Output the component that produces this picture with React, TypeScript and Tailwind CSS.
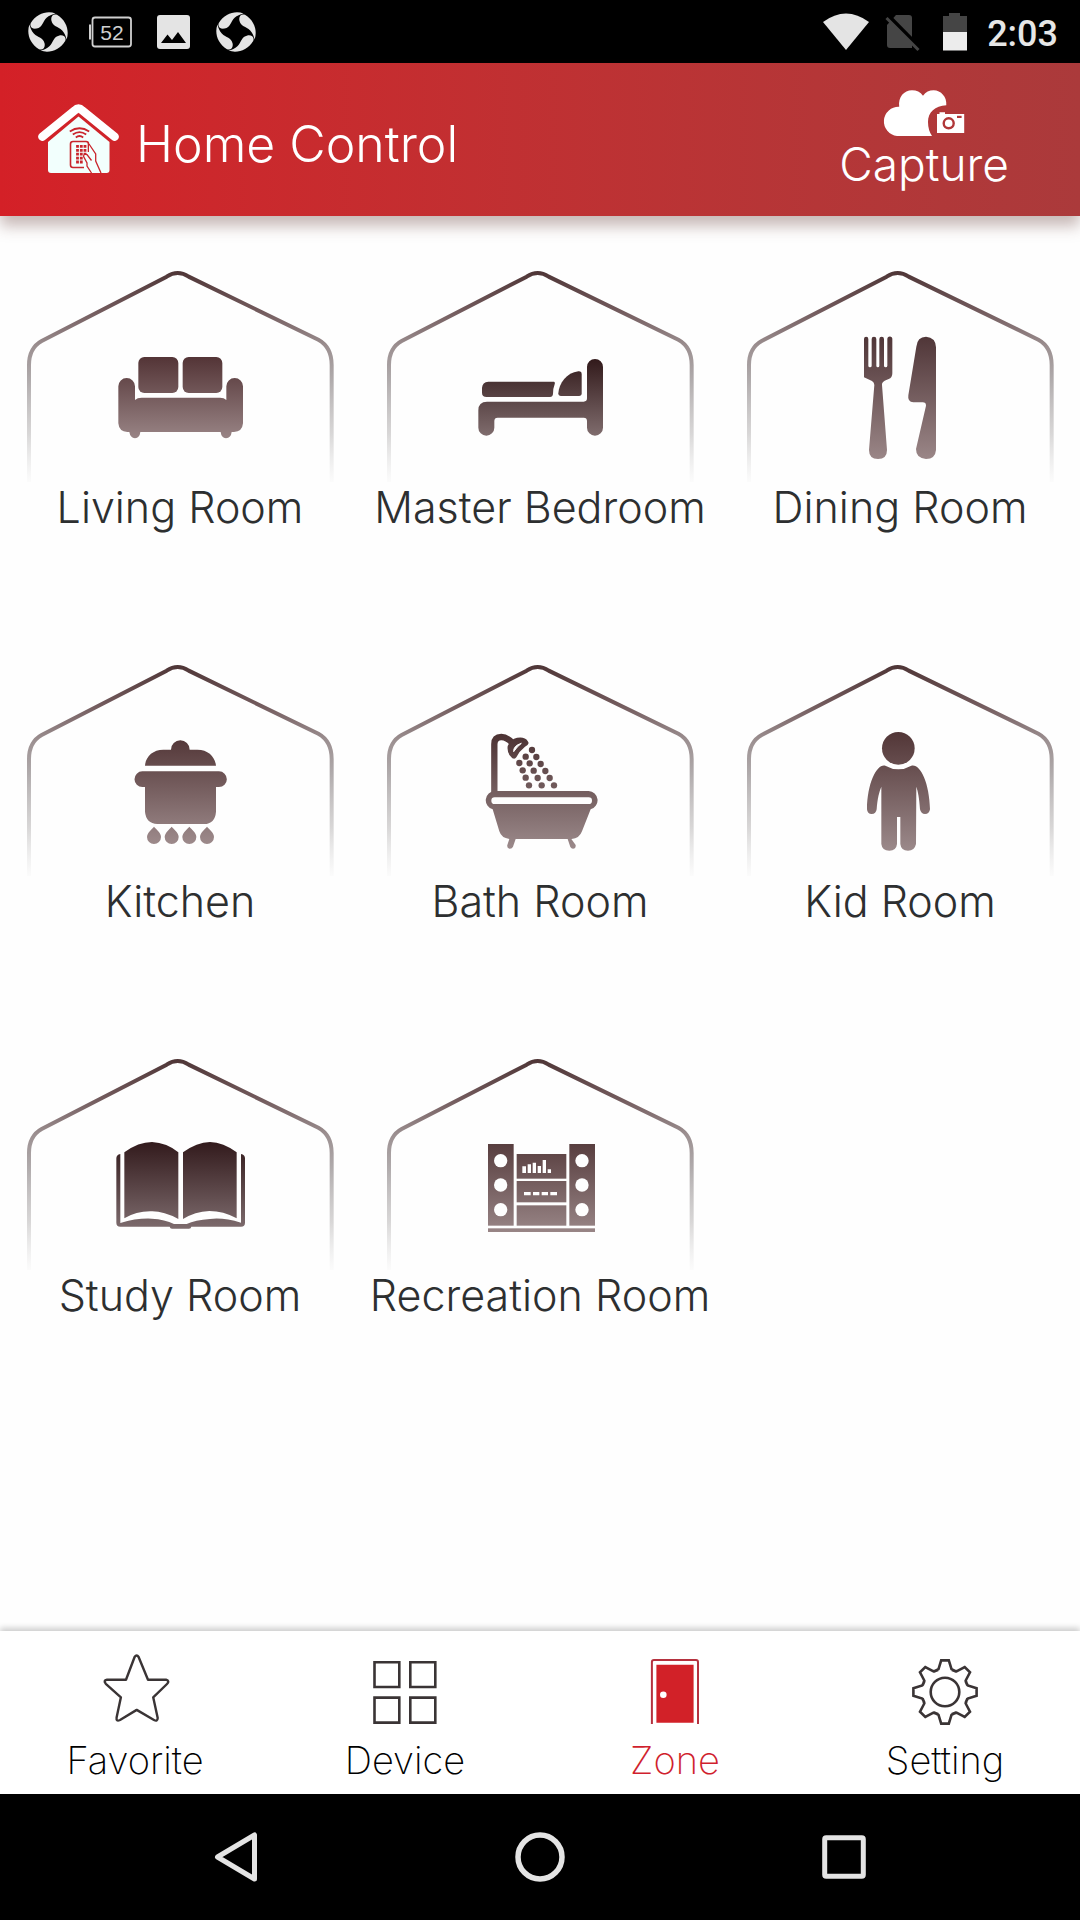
import React, { useState } from 'react';

const GradientDef = ({ id, y1, y2, from, to }) => (
  <linearGradient id={id} gradientUnits="userSpaceOnUse" x1="0" y1={y1} x2="0" y2={y2}>
    <stop offset="0" stopColor={from} />
    <stop offset="1" stopColor={to} />
  </linearGradient>
);

const SofaIcon = () => (
  <g fill="url(#sofa)">
    <GradientDef id="sofa" y1={320} y2={560} from="#533436" to="#978283" />
    <rect x="415" y="321" width="120" height="108" rx="18" />
    <rect x="548" y="321" width="119" height="108" rx="18" />
    <path d="M355 409a25 25 0 0 1 50 0V450Q412 443 425 443H660Q672 443 679 450V409a25 25 0 0 1 50 0V520Q727 545 702 546H695Q693 564 678 565Q664 564 662 546H421Q419 564 405 565Q391 564 388 546H382Q357 545 355 520Z" />
  </g>
);

const BedIcon = () => (
  <g fill="url(#bed)">
    <GradientDef id="bed" y1={327} y2={557} from="#321a1b" to="#7f6c6d" />
    <path d="M385 395H582Q586 396 584 403Q579 415 579 432Q578 441 570 441H380Q366 441 366 428V414Q367 396 385 395Z" />
    <path d="M665 372V430Q665 438 657 438H603Q595 438 595 430C597 400 620 368 655 364Q665 363 665 372Z" />
    <path d="M681 351a24 24 0 0 1 48 0V533a24 24 0 0 1-48 0V513q0-10-10-10H413q-10 0-10 10V533a24 24 0 0 1-48 0V481q0-26 26-26H671q10 0 10-10Z" />
  </g>
);

const CutleryIcon = () => (
  <g fill="url(#cutlery)">
    <GradientDef id="cutlery" y1={260} y2={627} from="#503638" to="#9a8687" />
    <path d="M432 267a6 6 0 0 1 13 0V347a5 5 0 0 0 10 0V267a7 7 0 0 1 14 0V347a4 4 0 0 0 9 0V267a7 7 0 0 1 14 0V347a5 5 0 0 0 10 0V267a7 7 0 0 1 15 0V370Q517 384 506 387L494 392Q485 397 486 405L501 600Q501 627 474 627Q447 627 447 600L463 405Q463 397 456 393L432 382Z" />
    <path d="M589 290Q592 260 618 260Q647 262 648 292V600Q646 627 618 627Q588 625 588 597L618 467Q618 457 608 457H580Q562 456 565 436Z" />
  </g>
);

const PotIcon = () => (
  <g transform="translate(300 198)" fill="url(#pot)">
    <GradientDef id="pot" y1={90} y2={402} from="#543839" to="#9d8a8b" />
    <path d="M135 167C137 140 158 119 190 119H213A28 28 0 0 1 269 119H292C325 119 345 140 348 167Z" />
    <path d="M127 184H357a23 23 0 0 1 0 47H348V305Q345 342 312 342H172Q138 340 135 305V231H127a23 23 0 0 1 0-47Z" />
    {[162, 215, 268, 321].map((x) => (
      <path key={x} d={`M${x} 350c6 8 21 17 21 31a21 21 0 0 1-42 0c0-14 15-23 21-31Z`} />
    ))}
  </g>
);

const showerDrops = [
  [216, 120], [197, 140], [229, 141], [178, 159], [209, 160],
  [242, 162], [188, 181], [221, 182], [256, 183], [197, 203],
  [233, 204], [269, 204], [207, 226], [245, 226], [282, 226],
];

const BathIcon = () => (
  <g transform="translate(300 198)" fill="url(#bath)">
    <GradientDef id="bath" y1={72} y2={415} from="#4c3233" to="#9b898a" />
    <path d="M103 246V103Q103 81 124 81Q141 81 156 98" fill="none" stroke="url(#bath)" strokeWidth="19" />
    <path d="M148 99Q162 80 188 83Q202 86 206 99Q204 107 195 110Q178 123 169 142Q165 149 157 145Q140 132 143 108Z" />
    <path d="M161 125Q160 107 184 100Q171 110 161 125Z" fill="#fefefe" stroke="#fefefe" strokeWidth="3" />
    {showerDrops.map(([x, y]) => (
      <circle key={`${x}-${y}`} cx={x} cy={y} r="9.5" />
    ))}
    <path
      fillRule="evenodd"
      d="M104 243H386A28 28 0 0 1 392 298L366 364Q358 386 335 387H334L347 405Q348 416 339 416Q334 416 331 411L323 387H167L159 410Q156 417 148 416Q140 414 142 405L148 387Q124 384 118 364L98 298A28 28 0 0 1 104 243ZM104 262a10 10 0 0 0 0 20H386a10 10 0 0 0 0-20Z"
    />
  </g>
);

const KidIcon = () => (
  <g transform="translate(300 198)" fill="url(#kid)">
    <GradientDef id="kid" y1={66} y2={422} from="#523637" to="#9b898a" />
    <circle cx="235" cy="115" r="49" />
    <path d="M196 167Q235 189 274 167C300 160 328 215 330 298Q328 312 315 312Q303 312 300 298C298 265 294 245 289 230L288 402Q284 422 264 422Q243 422 241 402V321H231V402Q229 422 208 422Q186 422 184 402V230C178 245 172 265 170 298Q168 312 155 312Q142 312 141 298C142 215 172 160 196 167Z" />
  </g>
);

const BookIcon = () => (
  <g transform="translate(270 216)" fill="url(#book)">
    <GradientDef id="book" y1={96} y2={356} from="#321a1c" to="#7d6b6d" />
    <path d="M103 127Q145 96 186 96Q230 98 265 127V327Q220 303 184 304Q140 303 103 325Z" />
    <path d="M279 127Q320 97 360 96Q400 97 440 127V325Q400 303 358 303Q315 305 279 327Z" />
    <path d="M91 132Q79 134 79 145V338Q79 350 91 350H239Q240 356 246 356H297Q303 356 304 350H453Q465 350 465 338V145Q465 134 453 132V338Q400 322 360 327Q315 330 290 342H252Q225 328 185 326Q140 324 91 339Z" />
  </g>
);

const StereoIcon = () => (
  <g transform="translate(300 216)" fill="url(#stereo)">
    <GradientDef id="stereo" y1={102} y2={366} from="#583e3f" to="#988586" />
    <rect x="84" y="102" width="77" height="245" />
    <rect x="328" y="102" width="77" height="245" />
    <rect x="170" y="132" width="149" height="74" />
    <rect x="170" y="213" width="149" height="64" />
    <rect x="170" y="286" width="149" height="61" />
    <rect x="84" y="355" width="321" height="11" />
    <g fill="#fefefe">
      {[152, 225, 299].map((y) => (
        <React.Fragment key={y}>
          <circle cx="122" cy={y} r="20" />
          <circle cx="366" cy={y} r="20" />
        </React.Fragment>
      ))}
      <path d="M187 169h11v20h-11zM203 163h10v26h-10zM218 158h10v31h-10zM233 168h10v21h-10zM248 150h10v39h-10zM263 178h10v11h-10z" />
      <path d="M192 246h20v10h-20zM219 246h19v10h-19zM245 246h19v10h-19zM271 246h20v10h-20z" />
    </g>
  </g>
);

const rooms = [
  { name: 'Living Room', icon: SofaIcon },
  { name: 'Master Bedroom', icon: BedIcon },
  { name: 'Dining Room', icon: CutleryIcon },
  { name: 'Kitchen', icon: PotIcon },
  { name: 'Bath Room', icon: BathIcon },
  { name: 'Kid Room', icon: KidIcon },
  { name: 'Study Room', icon: BookIcon },
  { name: 'Recreation Room', icon: StereoIcon },
];

const RoomCard = ({ name, icon: Icon }) => (
  <button className="flex flex-col items-center">
    <svg viewBox="0 0 1080 696" className="w-full h-auto">
      <defs>
        <linearGradient id="frame" gradientUnits="userSpaceOnUse" x1="0" y1="62" x2="0" y2="715">
          <stop offset="0" stopColor="#4e3536" />
          <stop offset="0.18" stopColor="#71595b" />
          <stop offset="0.35" stopColor="#9c9091" />
          <stop offset="0.5" stopColor="#b0abac" />
          <stop offset="0.75" stopColor="#c8c6c6" stopOpacity="0.7" />
          <stop offset="1" stopColor="#dddddd" stopOpacity="0" />
        </linearGradient>
      </defs>
      <path
        d="M87 696V345C87 310 98 288 125 273L500 80Q533 58 566 80L955 269C984 285 995 310 995 345V696"
        fill="none"
        stroke="url(#frame)"
        strokeWidth="12"
      />
      <Icon />
    </svg>
    <span className="text-[43px] leading-[50px] text-[#2d2f30] whitespace-nowrap">{name}</span>
  </button>
);

const StarIcon = () => (
  <path
    d="M35.6 3Q37.7 0 39.6 3L49 25.7H67Q71 27 68 30L54.2 43.3L58.7 64Q58.5 68 55 66L37.7 55.9L21 66Q17 68 17.6 63.5L21.9 43.3L6.8 29.8Q4 26.5 8 25.7H27Z"
    stroke="#3a3435"
    strokeWidth="2.4"
    strokeLinejoin="round"
  />
);

const GridIcon = () => (
  <path
    d="M5.5 8.3h24.8v24.7h-24.8zM41.3 8.3h25v24.7h-25zM5.5 43.6h24.8v25h-24.8zM41.3 43.6h25v25h-25z"
    stroke="#3a3435"
    strokeWidth="2.6"
  />
);

const DoorIcon = () => (
  <>
    <path d="M12.9 70V8Q12.9 6 15 6H57Q59 6 59 8V70" stroke="#b5323f" strokeWidth="2" />
    <path d="M17.4 10.7H54.6V68.7H17.4Z" fill="#d22128" />
    <circle cx="24.3" cy="40.7" r="3.3" fill="#fff" />
  </>
);

// One tooth of the gear, repeated every 45 degrees
const tooth = [[-11, -20.5], [-6.5, -22.8], [-3.8, -31.6], [3.8, -31.6], [6.5, -22.8], [11, -20.5]];
const gearPoints = Array.from({ length: 8 }, (_, i) => {
  const a = (i * Math.PI) / 4;
  return tooth
    .map(([x, y]) => {
      const px = 36 + x * Math.cos(a) - y * Math.sin(a);
      const py = 38 + x * Math.sin(a) + y * Math.cos(a);
      return `${px.toFixed(1)},${py.toFixed(1)}`;
    })
    .join(' ');
}).join(' ');

const GearIcon = () => (
  <g stroke="#3a3435" strokeWidth="2.6">
    <polygon points={gearPoints} />
    <circle cx="36" cy="38" r="14.3" />
  </g>
);

const tabs = [
  { name: 'Favorite', icon: StarIcon },
  { name: 'Device', icon: GridIcon },
  { name: 'Zone', icon: DoorIcon },
  { name: 'Setting', icon: GearIcon },
];

const SwirlIcon = () => (
  <svg viewBox="0 0 40 40" className="w-10 h-10" fill="#e4e4e4">
    {[0, 90, 180, 270].map((deg) => (
      <path
        key={deg}
        transform={`rotate(${deg} 20 20)`}
        d="M27.5 1.4C19 -1.6 8.5 1.5 2.8 11C1.2 15 4.6 17.4 8.6 16.6C14.6 15.4 14.4 10 18.6 5.8C21 3.4 24 2.4 27.5 1.4Z"
      />
    ))}
  </svg>
);

const StatusBar = () => (
  <div className="h-[63px] bg-black flex items-center justify-between pl-7 pr-[22px]">
    <div className="flex items-center gap-5">
      <SwirlIcon />
      <svg viewBox="0 0 48 40" className="w-12 h-10" fill="none" stroke="#d0d0d0">
        <rect x="4.5" y="5.5" width="38.5" height="29" rx="2.5" strokeWidth="1.8" />
        <path d="M2 12.5V27.5" strokeWidth="2" />
        <text x="24" y="28" textAnchor="middle" fontSize="21" fontWeight="400" fontFamily="Liberation Sans, sans-serif" fill="#d0d0d0" stroke="none">
          52
        </text>
      </svg>
      <svg viewBox="0 0 40 40" className="w-10 h-10">
        <rect x="1" y="3" width="33" height="34" rx="3" fill="#e4e4e4" />
        <path d="M5 31L11.5 22.5L16 28L22 20L30 31Z" fill="#000" />
      </svg>
      <SwirlIcon />
    </div>
    <div className="flex items-center gap-3">
      <svg viewBox="0 0 48 40" className="w-12 h-10">
        <path d="M0 10Q23-7 46 10L23 38Z" fill="#e4e4e4" />
      </svg>
      <svg viewBox="0 0 44 40" className="w-11 h-10">
        <path d="M13 3H26Q29 3 29 6V36H7Q4 36 4 33V13Z" fill="#454545" />
        <path d="M5.5 4L38 37" stroke="#000" strokeWidth="4" />
        <path d="M3.5 6L35.5 38" stroke="#454545" strokeWidth="3" />
      </svg>
      <svg viewBox="0 0 36 40" className="w-9 h-10">
        <path d="M10 1H21V4H28V20H4V4H10Z" fill="#454545" />
        <path d="M4 20H28V38.5H4Z" fill="#ececec" />
      </svg>
      <span className="pt-1 [font-family:Roboto,sans-serif] font-medium text-[36px] leading-[44px] text-[#e6e6e6]">
        2:03
      </span>
    </div>
  </div>
);

const HomeLogo = () => (
  <svg viewBox="0 0 84 80" className="w-[84px] h-20" fill="none">
    <path d="M12 42L42.5 16.5L73.5 42V70Q73.5 73 70.5 73H15Q12 73 12 70Z" fill="#f2fffd" />
    <path d="M6.3 36.7L39 10.3Q42.5 6.5 46 10.3L78.7 36.7" stroke="#fff" strokeWidth="8.4" strokeLinecap="round" />
    <g stroke="#c9252c">
      <path d="M33.8 31.5Q43.5 25 53.2 31.5" strokeWidth="1.8" />
      <path d="M36.8 34.5Q43.5 29.8 50.2 34.5" strokeWidth="1.8" />
      <path d="M39.8 37.5Q43.5 34.6 47.2 37.5" strokeWidth="1.8" />
      <path d="M48 67.5H37Q34.5 67.5 34.5 65V44Q34.5 41.5 37 41.5H50Q52.5 41.5 52.5 44V52" strokeWidth="1.6" />
      <path d="M41.5 45V64M45.3 45V64M49 45V56" strokeWidth="2.8" strokeDasharray="2.8 1.1" />
    </g>
    <path d="M65 73L59.7 61V54L53 44V56L51 54.5Q47.5 53.5 47.6 56.5L51 63V66L55.5 73Z" fill="#f2fffd" />
    <path
      d="M65 73L59.7 61V54L53 44M55.5 60.5L51 54.5Q47.5 53.5 47.6 56.5L51 63V66L55.5 73"
      stroke="#c9252c"
      strokeWidth="1.3"
    />
  </svg>
);

const CloudCameraIcon = () => (
  <svg viewBox="0 0 84 48" className="w-[84px] h-12" fill="#fff">
    <path d="M15 48A14.7 14.7 0 0 1 17.2 18.7C16 9 22 2.3 30 2.3Q37 2.3 41 7.7Q45 2.3 51.6 2.3C59 2.3 65 9 64.3 17.2C53 18 46 24 46 34Q46 42 50 48Z" />
    <path d="M55 26H57.5V24.3H63V26H82.2V45H55Z" />
    <circle cx="66.7" cy="35.3" r="5" stroke="#b03637" strokeWidth="2.4" />
    <rect x="75" y="27.8" width="4.6" height="2.2" fill="#b03637" />
  </svg>
);

const App = () => {
  const [activeTab, setActiveTab] = useState('Zone');

  return (
    <div className="min-h-screen flex flex-col bg-[#fefefe] [font-family:Inter,'Liberation_Sans',sans-serif] font-light">
      <StatusBar />

      {/* Header */}
      <header className="relative z-10 h-[153px] pl-9 pr-[71px] flex items-center justify-between bg-linear-to-r from-[#d42027] to-[#ab3a3b] shadow-[0_10px_14px_rgba(95,50,45,0.34)]">
        <div className="flex items-center gap-4">
          <HomeLogo />
          <h1 className="pt-2 text-[50px] leading-[56px] text-white">Home Control</h1>
        </div>
        <button className="flex flex-col items-center text-white">
          <CloudCameraIcon />
          <span className="text-[46px] leading-[56px]">Capture</span>
        </button>
      </header>

      {/* Rooms */}
      <main className="flex-1 pt-[34px]">
        <div className="grid grid-cols-3 gap-y-28">
          {rooms.map((room) => (
            <RoomCard key={room.name} name={room.name} icon={room.icon} />
          ))}
        </div>
      </main>

      {/* Bottom tabs */}
      <nav className="relative z-10 grid grid-cols-4 pt-[23px] pb-3 bg-white shadow-[0_-3px_6px_rgba(0,0,0,0.2)]">
        {tabs.map(({ name, icon: Icon }) => (
          <button
            key={name}
            onClick={() => setActiveTab(name)}
            className={`flex flex-col items-center gap-3 font-extralight ${
              activeTab === name ? 'text-[#d01f2e]' : 'text-black'
            }`}
          >
            <svg viewBox="0 0 72 72" className="w-[72px] h-[72px]" fill="none">
              <Icon />
            </svg>
            <span className="text-[38px] leading-[44px]">{name}</span>
          </button>
        ))}
      </nav>

      {/* Android navigation */}
      <div className="h-[126px] px-[84px] grid grid-cols-3 items-center justify-items-center bg-black">
        <button aria-label="Back">
          <svg viewBox="0 0 56 56" className="w-14 h-14" fill="none" stroke="#e4e4e4" strokeWidth="5" strokeLinejoin="round">
            <path d="M46.5 6V50L9.5 28Z" />
          </svg>
        </button>
        <button aria-label="Home">
          <svg viewBox="0 0 56 56" className="w-14 h-14" fill="none" stroke="#e4e4e4" strokeWidth="5.5">
            <circle cx="28" cy="28" r="22" />
          </svg>
        </button>
        <button aria-label="Recent apps">
          <svg viewBox="0 0 56 56" className="w-14 h-14" fill="none" stroke="#e4e4e4" strokeWidth="5">
            <rect x="8.7" y="8.7" width="38.6" height="38.6" rx="1.5" />
          </svg>
        </button>
      </div>
    </div>
  );
};

export default App;
